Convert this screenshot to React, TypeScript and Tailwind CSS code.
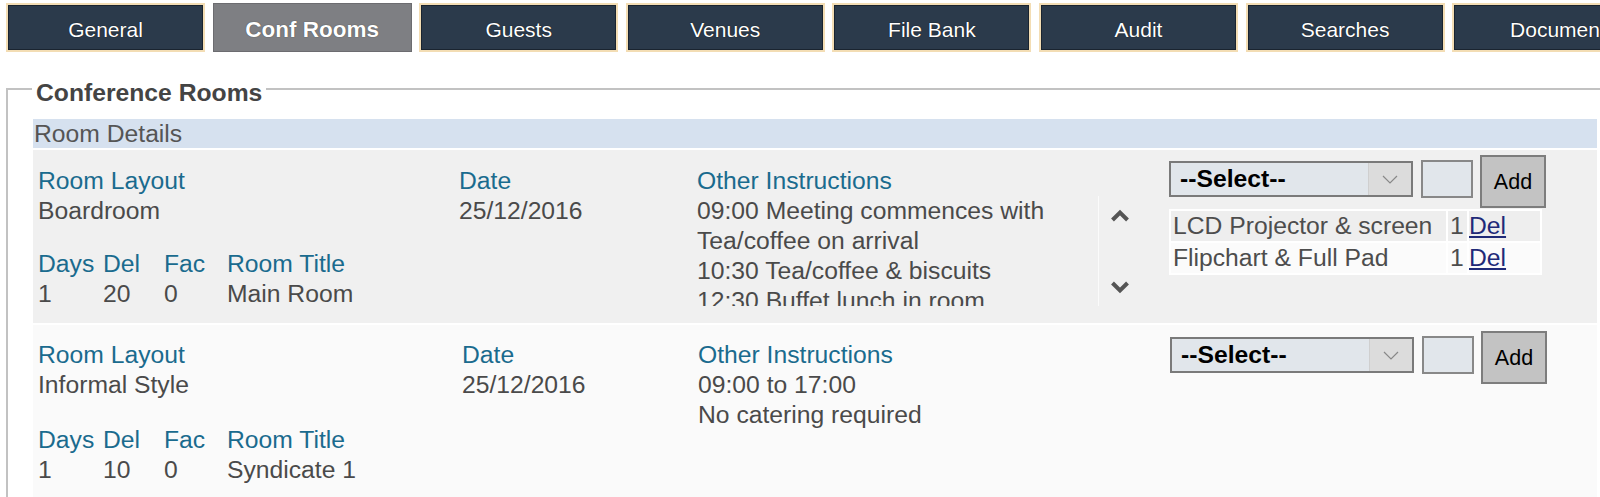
import React from 'react';

const tabs = [
    'General',
    'Conf Rooms',
    'Guests',
    'Venues',
    'File Bank',
    'Audit',
    'Searches',
    'Documents'
];

const Chevron = ({ up }: { up?: boolean }) => (
    <svg width="20" height="15" viewBox="0 0 20 15">
        <path
            d={up ? 'M2.5 12 L10 4.5 L17.5 12' : 'M2.5 3 L10 10.5 L17.5 3'}
            fill="none"
            stroke="#555"
            strokeWidth="4"
        />
    </svg>
);

const Label = ({ children }: { children: React.ReactNode }) => (
    <div className="text-[#1a6b8e] whitespace-nowrap">{children}</div>
);

const Value = ({ children }: { children: React.ReactNode }) => (
    <div className="text-[#4a4a4a] whitespace-nowrap">{children}</div>
);

const Controls = ({ items }: { items: string[] }) => (
    <div className="flex flex-col">
        <div className="flex items-start">
            <div className="mt-[6px] flex h-[36px] w-[244px] border-2 border-[#7a7a7a] bg-[#e1e6eb]">
                <div className="flex-1 pl-[9px] font-bold text-black leading-[32px] whitespace-nowrap">
                    --Select--
                </div>
                <div className="flex w-[43px] items-center justify-center bg-[#dcdcdc] border-l border-[#cfcfcf]">
                    <svg width="16" height="9" viewBox="0 0 16 9">
                        <path
                            d="M1 1 L8 8 L15 1"
                            fill="none"
                            stroke="#888"
                            strokeWidth="1.2"
                        />
                    </svg>
                </div>
            </div>
            <div className="ml-[8px] mt-[5px] h-[38px] w-[52px] border-2 border-[#888] bg-[#e1e6eb]" />
            <div className="ml-[7px] flex h-[53px] w-[66px] items-center justify-center border-2 border-[#7d7d7d] bg-[#c3c3c3] text-[21.5px] text-black">
                Add
            </div>
        </div>
        {items.length > 0 && (
            <table className="mt-[1px] w-[373px] border-separate border-spacing-[2px] bg-white">
                <tbody>
                    {items.map((it, idx) => (
                        <tr
                            key={idx}
                            className={idx === 0 ? 'bg-[#eeeeee]' : 'bg-[#fbfbfb]'}
                        >
                            <td className="w-[275px] h-[30px] p-0 pl-[2px] leading-[30px] text-[#4d4d4d] whitespace-nowrap">
                                {it}
                            </td>
                            <td className="w-[19px] p-0 pl-[2px] leading-[30px] text-[#4d4d4d]">
                                1
                            </td>
                            <td className="p-0 leading-[30px]">
                                <span className="text-[#1f2a78] underline">
                                    Del
                                </span>
                            </td>
                        </tr>
                    ))}
                </tbody>
            </table>
        )}
    </div>
);

const App = () => {
    return (
        <div className="w-[1600px] h-[497px] overflow-hidden bg-white font-['Liberation_Sans',Arial,sans-serif] text-[24.7px] leading-[30px]">
            {/* tab bar */}
            <div className="flex pt-[3px] pl-[6px] gap-[7.6px]">
                {tabs.map((t, i) =>
                    t === 'Conf Rooms' ? (
                        <div
                            key={t}
                            className="flex h-[49px] w-[199px] shrink-0 items-center justify-center pt-[4px] border border-[#6c6c70] bg-[#7e7f83] text-[22.5px] font-bold text-white [text-shadow:0_0_1px_#333] whitespace-nowrap"
                        >
                            {t}
                        </div>
                    ) : (
                        <div
                            key={t}
                            className={
                                (i === tabs.length - 1 ? 'w-[222px] ' : 'w-[199px] ') +
                                'flex h-[49px] shrink-0 items-center justify-center pt-[4px] border-2 border-[#f3ddb4] bg-[#2b3a4b] shadow-[inset_0_0_0_1px_#1a2430] text-[21px] text-white [text-shadow:0_0_1px_#000] whitespace-nowrap'
                            }
                        >
                            {t}
                        </div>
                    )
                )}
            </div>

            {/* fieldset */}
            <div className="mt-[19px] ml-[6px]">
                <div className="flex h-[36px] items-start">
                    <div className="mt-[17px] h-[19px] w-[26px] border-t-2 border-l-2 border-[#c2c2c2]" />
                    <div className="px-[4px] pt-[8px] leading-[28px] font-bold text-[#444] whitespace-nowrap">
                        Conference Rooms
                    </div>
                    <div className="mt-[17px] h-[2px] flex-1 bg-[#c2c2c2]" />
                </div>
                <div className="border-l-2 border-[#c2c2c2] pl-[25px] pr-[3px] pt-[12px]">
                    <div className="h-[29px] bg-[#d6e1ef] leading-[29px] text-[#555] pl-[1px]">
                        Room Details
                    </div>
                    <div className="mt-[2px] flex flex-col gap-[2px]">
                        {/* room 1 */}
                        <div className="flex bg-[#f0f0f0] pb-[14px]">
                            <div className="w-[426px] pl-[5px] pt-[16px]">
                                <Label>Room Layout</Label>
                                <Value>Boardroom</Value>
                                <div className="mt-[23px] flex">
                                    <div className="w-[65px]">
                                        <Label>Days</Label>
                                        <Value>1</Value>
                                    </div>
                                    <div className="w-[61px]">
                                        <Label>Del</Label>
                                        <Value>20</Value>
                                    </div>
                                    <div className="w-[63px]">
                                        <Label>Fac</Label>
                                        <Value>0</Value>
                                    </div>
                                    <div>
                                        <Label>Room Title</Label>
                                        <Value>Main Room</Value>
                                    </div>
                                </div>
                            </div>
                            <div className="w-[238px] pt-[16px]">
                                <Label>Date</Label>
                                <Value>25/12/2016</Value>
                            </div>
                            <div className="w-[472px] pt-[16px]">
                                <Label>Other Instructions</Label>
                                <div className="flex h-[110px]">
                                    <div className="w-[401px] overflow-hidden">
                                        <Value>09:00 Meeting commences with</Value>
                                        <Value>Tea/coffee on arrival</Value>
                                        <Value>10:30 Tea/coffee &amp; biscuits</Value>
                                        <Value>12:30 Buffet lunch in room</Value>
                                        <Value>15:30 Tea/coffee &amp; biscuits</Value>
                                    </div>
                                    <div className="flex w-[42px] flex-col items-center justify-between border-l border-[#fbfbfb] pt-[12px] pb-[11px]">
                                        <Chevron up />
                                        <Chevron />
                                    </div>
                                </div>
                            </div>
                            <div className="flex-1 pt-[5px]">
                                <Controls
                                    items={[
                                        'LCD Projector & screen',
                                        'Flipchart & Full Pad'
                                    ]}
                                />
                            </div>
                        </div>

                        {/* room 2 */}
                        <div className="flex bg-[#fafafa] pb-[14px]">
                            <div className="w-[429px] pl-[5px] pt-[15px]">
                                <Label>Room Layout</Label>
                                <Value>Informal Style</Value>
                                <div className="mt-[25px] flex">
                                    <div className="w-[65px]">
                                        <Label>Days</Label>
                                        <Value>1</Value>
                                    </div>
                                    <div className="w-[61px]">
                                        <Label>Del</Label>
                                        <Value>10</Value>
                                    </div>
                                    <div className="w-[63px]">
                                        <Label>Fac</Label>
                                        <Value>0</Value>
                                    </div>
                                    <div>
                                        <Label>Room Title</Label>
                                        <Value>Syndicate 1</Value>
                                    </div>
                                </div>
                            </div>
                            <div className="w-[236px] pt-[15px]">
                                <Label>Date</Label>
                                <Value>25/12/2016</Value>
                            </div>
                            <div className="w-[472px] pt-[15px]">
                                <Label>Other Instructions</Label>
                                <Value>09:00 to 17:00</Value>
                                <Value>No catering required</Value>
                            </div>
                            <div className="flex-1 pt-[6px]">
                                <Controls items={[]} />
                            </div>
                        </div>
                    </div>
                </div>
            </div>
        </div>
    );
};

export default App;
